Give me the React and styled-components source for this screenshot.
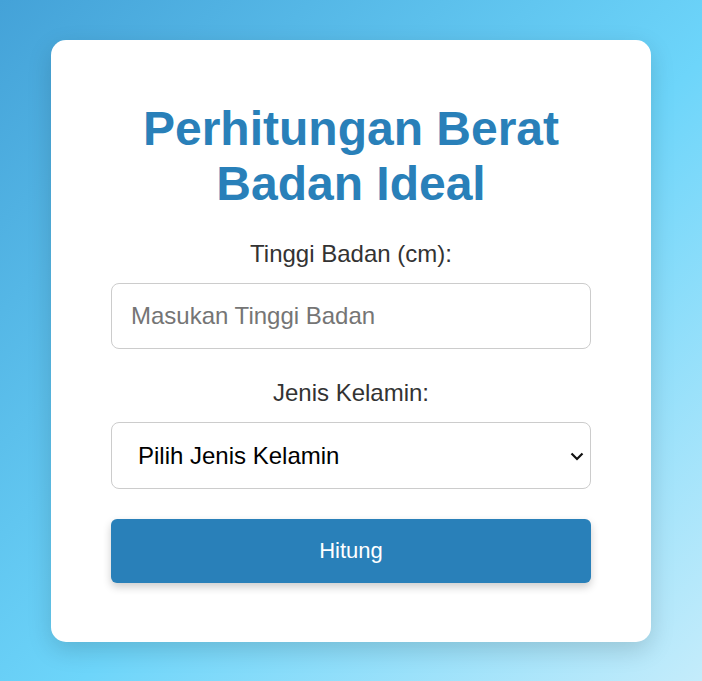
import styled, { createGlobalStyle } from 'styled-components';

const GlobalStyle = createGlobalStyle`
  * {
    box-sizing: border-box;
  }

  html, body {
    margin: 0;
    padding: 0;
    height: 100%;
  }

  body {
    font-family: "Liberation Sans", Arial, sans-serif;
    background: linear-gradient(135deg, #44a2d8 0%, #6dd5fa 55%, #c4ecfb 100%);
  }
`;

function App() {
  return (
    <>
      <GlobalStyle />
      <Page>
        <Card>
          <Title>Perhitungan Berat Badan Ideal</Title>
          <Field>
            <Label htmlFor="tinggi">Tinggi Badan (cm):</Label>
            <Input id="tinggi" type="number" placeholder="Masukan Tinggi Badan" />
          </Field>
          <Field>
            <Label htmlFor="kelamin">Jenis Kelamin:</Label>
            <SelectWrap>
              <Select id="kelamin" defaultValue="">
                <option value="">Pilih Jenis Kelamin</option>
                <option value="pria">Pria</option>
                <option value="wanita">Wanita</option>
              </Select>
              <Chevron width="14" height="9" viewBox="0 0 14 9" aria-hidden="true">
                <path d="M1.5 1.5 L7 7 L12.5 1.5" fill="none" stroke="#111" strokeWidth="2.2" />
              </Chevron>
            </SelectWrap>
          </Field>
          <Button type="button">Hitung</Button>
        </Card>
      </Page>
    </>
  );
}

const Page = styled.div`
  min-height: 100vh;
  display: flex;
  align-items: center;
  justify-content: center;
`;

const Card = styled.div`
  width: 600px;
  background: #ffffff;
  border-radius: 15px;
  padding: 40px 60px 59px;
  box-shadow: 0 8px 24px rgba(0, 0, 0, 0.15);
  display: flex;
  flex-direction: column;
`;

const Title = styled.h1`
  margin: 21px 0 29px;
  padding: 0 20px;
  text-align: center;
  color: #2980b9;
  font-size: 48px;
  font-weight: 700;
  line-height: 55px;
`;

const Field = styled.div`
  display: flex;
  flex-direction: column;
  gap: 15px;
  margin-bottom: 30px;
`;

const Label = styled.label`
  text-align: center;
  color: #333333;
  font-size: 24px;
  line-height: 28px;
`;

const Input = styled.input`
  width: 100%;
  height: 66px;
  padding: 0 19px;
  border: 1px solid #cccccc;
  border-radius: 8px;
  font-family: "Liberation Sans", Arial, sans-serif;
  font-size: 24px;
  color: #000;
  outline: none;

  &::placeholder {
    color: #757575;
  }

  &::-webkit-outer-spin-button,
  &::-webkit-inner-spin-button {
    -webkit-appearance: none;
    margin: 0;
  }
`;

const SelectWrap = styled.div`
  position: relative;
`;

const Select = styled.select`
  width: 100%;
  height: 67px;
  padding: 0 40px 0 26px;
  border: 1px solid #cccccc;
  border-radius: 8px;
  background: #ffffff;
  appearance: none;
  font-family: "Liberation Sans", Arial, sans-serif;
  font-size: 24px;
  color: #000;
  outline: none;
`;

const Chevron = styled.svg`
  position: absolute;
  right: 7px;
  top: 30px;
  pointer-events: none;
`;

const Button = styled.button`
  width: 100%;
  height: 64px;
  border: none;
  border-radius: 6px;
  background: #2980b9;
  color: #ffffff;
  font-family: "Liberation Sans", Arial, sans-serif;
  font-size: 22px;
  cursor: pointer;
  box-shadow: 0 4px 8px rgba(0, 0, 0, 0.2);
`;

export default App;
